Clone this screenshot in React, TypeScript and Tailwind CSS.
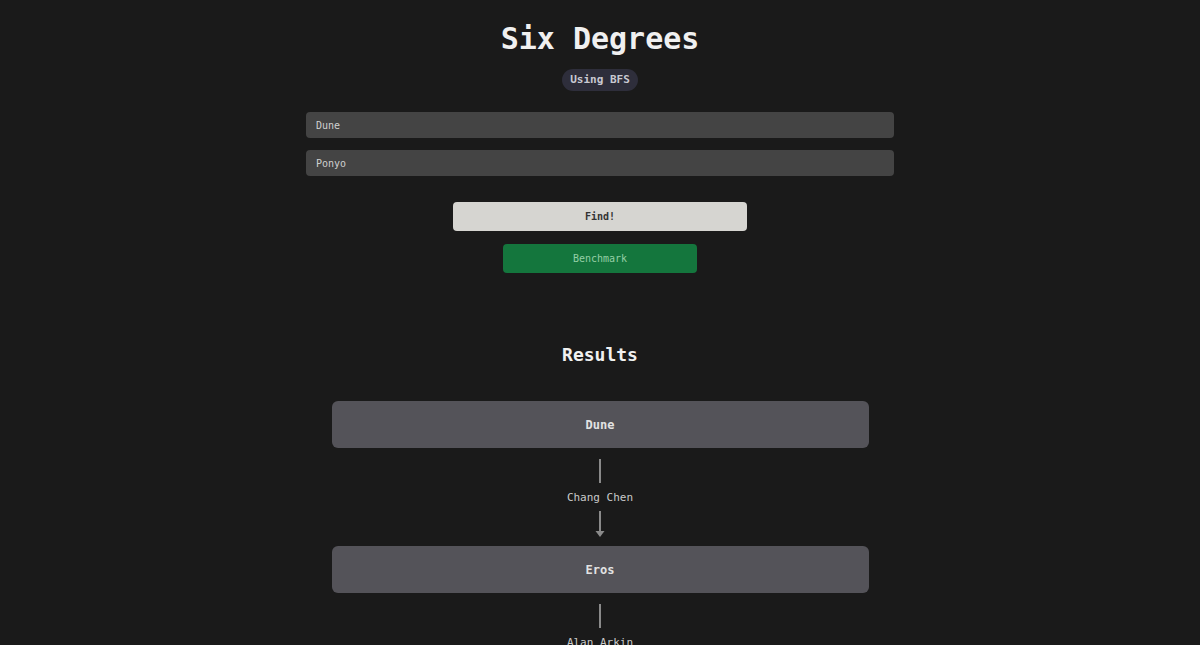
import { useState } from "react";

const mono = { fontFamily: '"DejaVu Sans Mono", "Liberation Mono", monospace' };

function Connector({ actor, last }: { actor: string; last?: boolean }) {
  return (
    <div className="flex flex-col items-center">
      <div className="mt-[11px] h-[24px] w-[2px] bg-[#8a8a8a]" />
      <div className="mt-[8px] text-[11px] leading-[14px] text-[#c9c9c9]">{actor}</div>
      {!last && (
        <svg className="mt-[6px] mb-[8px]" width="12" height="27" viewBox="0 0 12 27">
          <line x1="6" y1="0" x2="6" y2="22" stroke="#8a8a8a" strokeWidth="2" />
          <path d="M1.5 20 L6 26 L10.5 20 Z" fill="#8a8a8a" />
        </svg>
      )}
    </div>
  );
}

function Node({ title }: { title: string }) {
  return (
    <div className="flex h-[47px] w-[537px] items-center justify-center rounded-md bg-[#545359] text-[12px] font-bold text-[#e2e2e2]">
      {title}
    </div>
  );
}

export default function App() {
  const [from, setFrom] = useState("Dune");
  const [to, setTo] = useState("Ponyo");

  return (
    <div className="min-h-screen overflow-hidden bg-[#1a1a1a] text-white" style={mono}>
      <div className="flex flex-col items-center pt-[21px]">
        <h1 className="text-[30px] leading-[36px] font-bold text-[#f0f0f0]">Six Degrees</h1>
        <span className="mt-[12px] rounded-full bg-[#2e2e3b] px-[8px] py-[4px] text-[11px] leading-[14px] font-bold text-[#c9c9d2]">
          Using BFS
        </span>

        {/* inputs */}
        <div className="mt-[21px] flex w-[588px] flex-col gap-[12px]">
          <input
            value={from}
            onChange={e => setFrom(e.target.value)}
            className="h-[26px] w-full rounded-[4px] bg-[#444444] px-[10px] text-[10px] text-[#d0d0d0] outline-none"
          />
          <input
            value={to}
            onChange={e => setTo(e.target.value)}
            className="h-[26px] w-full rounded-[4px] bg-[#444444] px-[10px] text-[10px] text-[#d0d0d0] outline-none"
          />
        </div>

        {/* buttons */}
        <button className="mt-[26px] h-[29px] w-[294px] rounded-[4px] bg-[#d6d5d1] text-[10px] font-bold text-[#333333]">
          Find!
        </button>
        <button className="mt-[13px] h-[29px] w-[194px] rounded-[4px] bg-[#14763d] text-[10px] text-[#94cfa6]">
          Benchmark
        </button>

        {/* results */}
        <h2 className="mt-[70px] text-[18px] leading-[24px] font-bold text-[#f0f0f0]">Results</h2>
        <div className="mt-[34px] flex flex-col items-center">
          <Node title="Dune" />
          <Connector actor="Chang Chen" />
          <Node title="Eros" />
          <Connector actor="Alan Arkin" last />
        </div>
      </div>
    </div>
  );
}
